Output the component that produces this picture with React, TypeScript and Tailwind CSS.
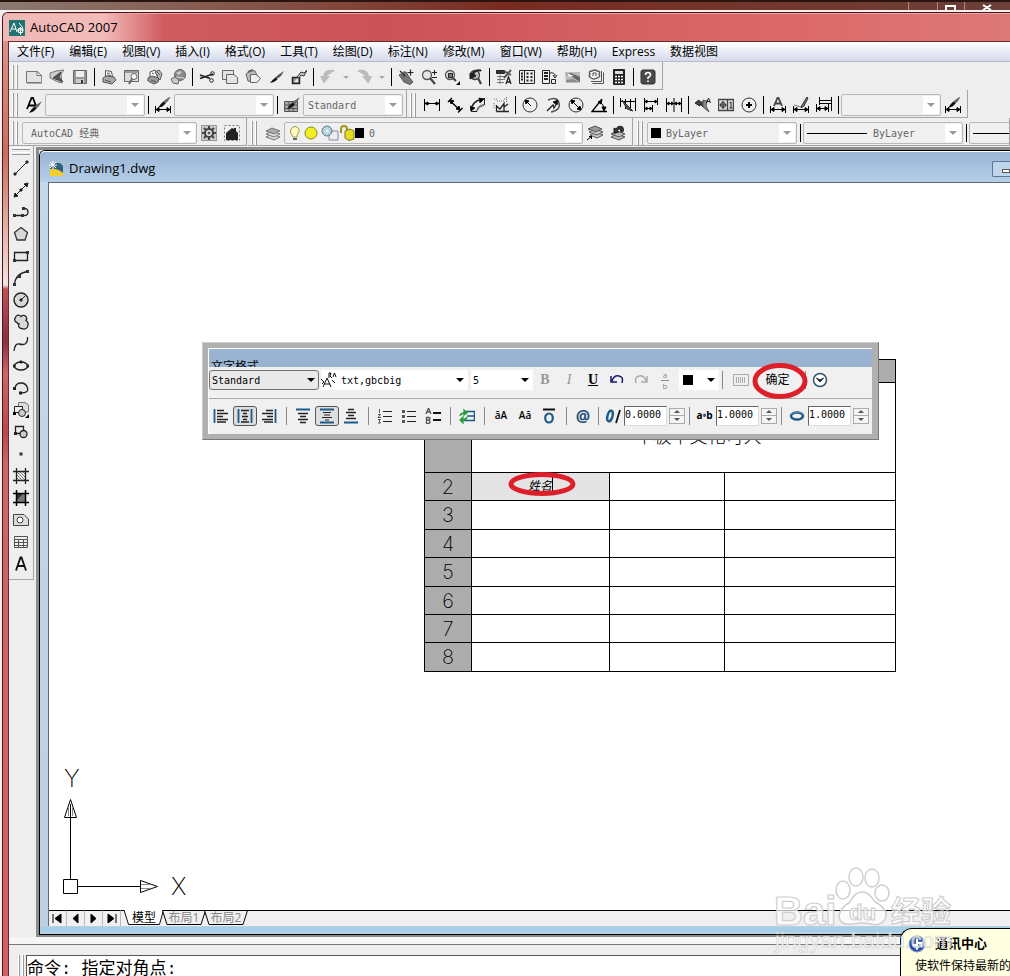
import React from 'react';

const UI = "font-['Open_Sans','Noto_Sans_CJK_SC',sans-serif]";
const MONO = "font-['DejaVu_Sans_Mono','Noto_Sans_CJK_SC',monospace]";

const K = '#222';
const G = '#777';
const L = '#d8d8d8';
const B = '#1c5a86';

const Brush = ({ y = 0 }: { y?: number }) => (
  <g transform={`translate(0 ${y})`} stroke="none">
    <path d="M16 0 10 4 8 6 10 8 13 5Z" fill="#666" />
    <path d="M8.500 5.500 10.500 7.500Q8 11 3 12 5 8 8.500 5.500Z" fill="#111" />
  </g>
);

// Extension lines with an arrowed dimension line along the bottom
const DimBase = () => (
  <g stroke="#000">
    <path d="M.5 9V16M15.500 9V16M1 12.500H15" />
    <path d="M1 12.500 4 10.500V14.500ZM15 12.500 12 10.500V14.500Z" fill="#000" />
  </g>
);

// All glyphs share a 16x16 box, default stroke is dark and one pixel wide
const glyphs: Record<string, React.ReactNode> = {
  new: <g><path d="M.5 2.500H11L15.500 6.500V13.500H.5Z" fill="#e4e4e4" stroke={G} /><path d="M11 2.500V6.500H15.500Z" fill="#fff" stroke={G} /><path d="M1 14.500H16V8" stroke="#aaa" /></g>,
  open: <g stroke={G}><path d="M1 4 7 2 15 1 12 5 13 14 9 13 1 9Z" fill="#ccc" /><path d="M4 9 12 3 10 8 14 13 9 11Z" fill="#555" stroke="#444" /></g>,
  save: <g><path d="M1.500 1.500H14.500V14.500H1.500Z" fill="#999" stroke="#666" /><path d="M4 2H12V8H4Z" fill="#eee" stroke="none" /><path d="M4 10H12V14H4Z" fill="#ccc" stroke="none" /><path d="M9 11H11V14H9Z" fill="#333" stroke="none" /></g>,
  print: <g stroke="#555"><path d="M4.500 8V1.500L10.500 2.500 11.500 8" fill="#fff" /><path d="M2 9 5 7 13 8 15 11 11 15 2 13Z" fill="#aaa" /><path d="M4 11 10 13M6 4 9 4.500M6 6 10 6.500" /></g>,
  preview: <g stroke="#666"><path d="M.5 1.500H14.500V12.500H.5Z" fill="#ddd" /><path d="M1 2H14V4H1Z" fill="#999" stroke="none" /><circle cx="10" cy="7.500" r="3" fill="#f4f4f4" /><path d="M8 10 5 15" strokeWidth="2" /></g>,
  publish: <g stroke="#555"><path d="M3 8V3L8 1 10 7" fill="#fff" /><path d="M1 9 5 7 12 9 11 13 7 15 1 12Z" fill="#999" /><path d="M8 3 12 1 15 5 13 11 11 9 10 6Z" fill="#bbb" /><path d="M4 11 9 13M5 4 7 5M10 3 13 6" /></g>,
  dwf: <g stroke="#666"><circle cx="10" cy="6" r="5.500" fill="#8a8a8a" /><path d="M6 4Q9 1 12 3L9 6Z" fill="#ccc" stroke="none" /><path d="M6 8 14 9" stroke="#ddd" /><path d="M1 10 5 8 9 11 8 15 3 14Z" fill="#ccc" /></g>,
  cut: <g stroke="#222"><path d="M1 6 11 9.500M1 9.500 14 5" strokeWidth="1.800" /><circle cx="13.500" cy="4.500" r="1.800" /><circle cx="12.500" cy="11.500" r="1.800" /></g>,
  copy: <g stroke="#666" fill="#e4e4e4"><path d="M.5 1.500H11.500V10.500H.5Z" /><path d="M4.500 5.500H12L15.500 8.500V14.500H4.500Z" /></g>,
  paste: <g stroke="#666"><path d="M1 5 6 1 10 2 13 8 10 13 3 12Z" fill="#bbb" /><path d="M5.500 5.500H11L15.500 9.500 12 13.500H5.500Z" fill="#eee" /><path d="M3 3 8 1" strokeWidth="2" /></g>,
  match: <g stroke="none"><path d="M16 2 10 6 7 9 9 10 13 7Z" fill="#555" /><path d="M7.500 8.500 9.500 10.500Q7 13 2 14 4 11 7.500 8.500Z" fill="#111" /></g>,
  block: <g><path d="M1.500 8.500H8.500V14.500H1.500Z" fill="#999" strokeWidth="1.500" /><path d="M3 13 7 9V13Z" fill="#eee" stroke="none" /><path d="M6 8 10 3 13 4 16 1 13 7 10 6 8 9Z" fill="#ccc" stroke="#333" /></g>,
  undo: <path d="M14 2Q4 0 4 9M1.500 8 4 13 8 8Z" stroke="#bbb" strokeWidth="2" fill="#bbb" />,
  redo: <path d="M2 2Q12 0 12 9M8 8 12 13 14.500 8Z" stroke="#bbb" strokeWidth="2" fill="#bbb" />,
  pan: <g><path d="M1 6 3 5 7 8 5 3 8 3 11 8 15 13 12 15.500 6 13Z" fill="#777" stroke="#555" /><path d="M2 2 7 7M12.500 .5V6.500M9.500 3.500H15.500" strokeWidth="1.200" /></g>,
  zoomrt: <g><circle cx="6" cy="6" r="4.500" fill="#e6e6e6" stroke="#555" strokeWidth="1.300" /><path d="M9 9 14 15" stroke="#444" strokeWidth="2.200" /><path d="M11 3.500H16M13.500 1V6M11 8.500H16" /></g>,
  zoomwin: <g><circle cx="6" cy="6" r="4.500" fill="#ddd" stroke="#555" strokeWidth="1.300" /><path d="M4.500 4.500H8.500V8.500H4.500Z" fill="#777" /><path d="M9 9 12 12" stroke="#444" strokeWidth="2.200" /><path d="M12 16H16V12Z" fill="#000" stroke="none" /></g>,
  zoomprev: <g><circle cx="8" cy="6" r="4.500" fill="#bbb" stroke="#444" strokeWidth="1.300" /><path d="M11 9 14 15" stroke="#444" strokeWidth="2.200" /><path d="M14 2Q8 1 7 5L9 7 3 10 3 4 5 5Q7 0 14 1Z" fill="#222" /></g>,
  props: <g><path d="M.5 1.500H8.500V4.500H.5Z" fill="#333" /><path d="M1 7.500H9M1 10.500H9M1 13.500H8M4 6V15" stroke={G} /><path d="M8 2 15 6M15 1 8 9" stroke="#555" strokeWidth="2" /><path d="M10 15 12.500 8 15 15M11 13H14.500" strokeWidth="1.300" /></g>,
  design: <g><path d="M.5 1.500H15.500V14.500H.5Z" fill="#eee" /><path d="M5.500 1.500V14.500" /><path d="M2 4.500H4M2 7.500H4M2 10.500H4M7.500 4.500H9.500M11.500 4.500H13.500M7.500 8H9.500M11.500 8H13.500M7.500 11.500H9.500M11.500 11.500H13.500" strokeWidth="2" /></g>,
  palette: <g><path d="M.5 1.500H7.500V14.500H.5Z" fill="#eee" /><path d="M2 4H6M2 7H6M2 10H6" strokeWidth="2" /><path d="M8 4Q13 3 13 7M11 6 13 9 15 6M9.500 10.500H13.500V14.500H9.500Z" /></g>,
  sheet: <g stroke="none"><path d="M0 3H15V14H1Z" fill="#bbb" /><path d="M1 5 6 4 15 8V13L9 9Z" fill="#666" /><path d="M2 4 9 7 4 8Z" fill="#eee" /><path d="M1 11 8 10 14 13H1Z" fill="#888" /></g>,
  markup: <g stroke="#555"><path d="M4.500 14.500H15.500V3.500M3 12.500H13.500V2" /><path d="M3 9Q0 7 2 5 0 2 4 2 7 0 9 2 13 2 11 5 13 8 9 9 6 11 3 9Z" fill="#eee" strokeWidth="1.300" /><path d="M5 7V4H8V7" /></g>,
  calc: <g><path d="M2.500 .5H13.500V15.500H2.500Z" fill="#222" /><path d="M4 2H12V5H4Z" fill="#ddd" stroke="none" /><path d="M4 7.500H12M4 10.500H12M4 13.500H12" stroke="#fff" strokeWidth="1.500" strokeDasharray="2 1" /></g>,
  help: <g><rect x="1" y="1" width="14" height="14" rx="2" fill="#4a4a4a" stroke="#333" /><path d="M5.500 6Q5.500 3.500 8 3.500T10.500 6Q10.500 7.500 8 8.500V10M8 11.500V13" stroke="#fff" strokeWidth="1.600" /></g>,
  textstyle: <g><path d="M1 12 5.500 1H7L10 9M3 8.500H9" strokeWidth="1.800" stroke="#000" /><Brush y={4} /></g>,
  dimstyle: <g><DimBase /><Brush y={-1} /></g>,
  tablestyle: <g><path d="M.5 4.500H13.500V14.500H.5ZM.5 8H13.500M.5 11.500H13.500M5 5V14M9 5V14" fill="#aaa" stroke="#555" /><Brush /></g>,
  linear: <path d="M.5 2V14M15.500 2V14M1 6.500H15M1 6.500 4 5V8ZM15 6.500 12 5V8Z" fill="#000" stroke="#000" />,
  aligned: <g stroke="#000"><path d="M2 3 13 13M1 5 5 1M11 15.500 15.500 11" strokeWidth="1.400" /><path d="M3 3 7 4 4 7ZM13 13 9 12 12 9Z" fill="#000" /></g>,
  arclen: <g><path d="M1 14Q2 3 14 2" strokeWidth="1.500" /><path d="M7 14Q8 9 14 8" stroke={G} strokeWidth="1.800" /><path d="M1 14.500H7M14.500 1V8" /><path d="M0 9 1 14 5 11ZM9 1 14 2 10 6Z" fill="#000" /></g>,
  ordinate: <g><path d="M3.500 14.500V9L7 12 11 6.500V14.500H3.500M11 10 15 7M4 14.500H16" strokeWidth="1.300" /><path d="M1 2H5M11 2H15M1 6V12M13.500 0V6M4 4H11" stroke={G} strokeDasharray="1 1" /></g>,
  radius: <g><circle cx="8" cy="8" r="7" stroke="#333" /><path d="M9 9 5 5" stroke="#000" /><path d="M3 3 7 4 4 7Z" fill="#000" stroke="#000" /></g>,
  jogged: <g><path d="M3 3Q12 -1 14 6T6 15" stroke="#555" strokeWidth="1.500" /><path d="M2 14 8 8 9 11 13 4" strokeWidth="1.300" /><path d="M13 3 8 5 12 8Z" fill="#000" /></g>,
  diameter: <g><circle cx="8" cy="8" r="7" stroke="#333" /><path d="M4 4 12 12M3 3 7 4 4 7ZM13 13 9 12 12 9Z" fill="#000" stroke="#000" /></g>,
  angular: <g stroke="#000"><path d="M16 14.500H1L11 2" strokeWidth="1.300" /><path d="M9 5Q13 7 13 13" /><path d="M7 5 11 3 10 7ZM11 10H15L13 14Z" fill="#000" /></g>,
  quick: <g stroke="#000"><path d="M.5 1V10M15.500 1V14M1 4.500H15M5.500 2V12M10.500 2V14" /><path d="M2 3 13 14 7 12Z" fill="#555" stroke="#333" /></g>,
  baseline: <g stroke="#000"><path d="M1.500 1V15M14.500 1V8M9.500 8V15M2 4.500H14M2 11.500H9" /><path d="M2 4.500 4 3V6ZM14 4.500 12 3V6ZM2 11.500 4 10V13ZM9 11.500 7 10V13Z" fill="#000" /></g>,
  contin: <g stroke="#000"><path d="M.5 1V15M8 1V15M15.500 1V15M1 6.500H15" /><path d="M1 6.500 3 5V8ZM7.500 6.500 5.500 5V8ZM8.500 6.500 10.500 5V8ZM15 6.500 13 5V8Z" fill="#000" /></g>,
  leader: <g><path d="M0 6 4 3 5 5Q9 4 10 9L8 10 5 7 5 9Z" fill="#444" /><path d="M8 3 12 4 11 9 14 15 8 10Z" fill="#888" stroke="#555" /><path d="M11.500 6 13.500 1 15.500 6M12 4.500H15" /></g>,
  tolerance: <g><path d="M.5 2.500H15.500V13.500H.5ZM9.500 2.500V13.500" fill="#ddd" stroke="#444" strokeWidth="1.300" /><circle cx="5" cy="8" r="2.500" /><path d="M5 4V12M1.500 8H8.500M11.500 6 13 5V11M11.500 11H14.500" /></g>,
  center: <g><circle cx="8" cy="8" r="7" stroke="#333" /><path d="M8 5V11M5 8H11" strokeWidth="2" stroke="#000" /></g>,
  dimedit: <g><path d="M4 9 7.500 1H8.500L12 9M5 6.500H11" strokeWidth="1.800" stroke="#444" /><DimBase /></g>,
  dimtext: <g><path d="M14 0 9 8 8 11 11 9 15 1Z" fill="#777" stroke="#333" /><path d="M1 8 8 10" stroke={G} /><DimBase /></g>,
  dimupd: <g stroke="#000"><path d="M3.500 0V8M15.500 0V14M4 3.500H15M.5 7V15M12.500 7V15M1 11.500H12M3 6.500H15" /><path d="M1 11.500 4 9.500V13.500ZM12 11.500 9 9.500V13.500Z" fill="#000" /></g>,
  gear: <g><rect x=".5" y=".5" width="15" height="15" fill="#ccc" stroke="#555" strokeDasharray="1 1" /><circle cx="8" cy="8" r="4" stroke="#444" strokeWidth="2.200" fill="#eee" /><path d="M8 1V4M8 12V15M1 8H4M12 8H15M3 3 5 5M11 11 13 13M13 3 11 5M3 13 5 11" stroke="#444" strokeWidth="2" /><circle cx="8" cy="8" r="1" /></g>,
  home: <g><rect x=".5" y=".5" width="15" height="15" stroke={G} strokeDasharray="2 2" /><path d="M2 8 8 3 10 4V3H12V6L14 8V15H2Z" fill="#222" stroke="none" /></g>,
  layers: <g stroke="#777" fill="#ddd"><path d="M1 12 7 9 15 12 9 15Z" /><path d="M1 9 7 6 15 9 9 12Z" /><path d="M1 6 7 3 15 6 9 9Z" fill="#aaa" /></g>,
  makelayer: <g stroke="#555" fill="#ccc"><path d="M3 10 9 7 16 10 10 13Z" /><path d="M2 7 8 4 16 7 10 10Z" /><path d="M1 4 8 1 15 4 9 7Z" fill="#999" /><path d="M0 15 5 11M4.500 14V11.500H2" stroke="#000" /></g>,
  prevlayer: <g stroke="#555" fill="#bbb"><path d="M1 12 7 9 15 12 9 15Z" /><path d="M1 9 7 6 15 9 9 12Z" /><path d="M13 7Q15 0 8 1.500L6 4 4 3 4 8.500 9 7 7.500 5.500Q10 2 11 7Z" fill="#333" stroke="#222" /></g>,
  line: <path d="M2 14 14 2M1 13H3V15H1ZM13 1H15V3H13Z" fill="#333" />,
  xline: <path d="M2 14 14 2M1 15 2 11 5 14ZM15 1 11 2 14 5ZM7 7H9V9H7Z" fill="#000" />,
  pline: <g><path d="M1 11.500H9M10 4.500Q15 4 15 8T10 11.500" strokeWidth="1.300" /><path d="M0 10H3V13H0ZM8 10H11V13H8ZM9 3H12V6H9Z" fill="#333" stroke="none" /></g>,
  polygon: <path d="M8 1.500 14.500 6.500 12 14H4L1.500 6.500Z" fill={L} stroke="#333" strokeWidth="1.300" />,
  rect: <g><path d="M1.500 4.500H14.500V12.500H1.500Z" fill="#e8e8e8" strokeWidth="1.300" /><path d="M0 11H3V14H0ZM13 3H16V6H13Z" fill="#333" stroke="none" /></g>,
  arc: <g><path d="M1.500 14Q3 3 15 1.500" strokeWidth="1.300" /><path d="M0 13H3V16H0ZM5 5H8V8H5ZM13 0H16V3H13Z" fill="#333" stroke="none" /></g>,
  circle: <g><circle cx="8" cy="8" r="7" fill={L} strokeWidth="1.400" /><path d="M8 8 12 4M7 7H9V9H7Z" fill="#222" /></g>,
  cloud: <path d="M4 8.500A3 3 0 0 1 2.500 3.500 3 3 0 0 1 8 2.500 3 3 0 0 1 13 6.500 4 4 0 0 1 15 11 4 4 0 0 1 9 14.500 3 3 0 0 1 6 10 2 2 0 0 1 4 8.500Z" fill={L} strokeWidth="1.300" />,
  spline: <path d="M1 15Q2 7 6 8T12 8Q15 6 14.500 1" strokeWidth="1.300" />,
  ellipse: <g><ellipse cx="8" cy="8" rx="6.500" ry="4" fill="#eee" strokeWidth="1.400" /><path d="M0 7H2V9H0ZM14 7H16V9H14ZM7 3H9V5H7Z" fill="#222" /></g>,
  ellarc: <g><path d="M2 8Q3 3 8 3T14.500 8 8 13" strokeWidth="1.300" fill="#e8e8e8" /><path d="M0 7H3V10H0ZM6 11.500H9V14.500H6Z" fill="#222" stroke="none" /></g>,
  insert: <g><path d="M5.500 .5H12L15.500 3V10H5.500Z" fill="#ddd" stroke={G} /><path d="M1.500 4.500H9.500V10.500H1.500Z" fill="#eee" /><circle cx="9" cy="11" r="3.500" fill="#ccc" /><path d="M0 10H3V13H0ZM12 16H16V12Z" fill="#000" stroke="none" /></g>,
  mkblock: <g><path d="M2.500 2.500H10.500V9.500H2.500Z" fill="#eee" strokeWidth="1.300" /><circle cx="10.500" cy="10" r="3.500" fill="#ccc" strokeWidth="1.300" /><path d="M1 8H4V11H1Z" fill="#222" stroke="none" /></g>,
  point: <path d="M6.500 6.500H9.500V9.500H6.500Z" fill="#333" stroke="none" />,
  hatch: <g><path d="M4 4 12 12M4 7 9 12M7 4 12 9M4 10 6 12M10 4 12 6" stroke={G} /><path d="M3.500 0V16M12.500 0V16M0 3.500H16M0 12.500H16" strokeWidth="1.300" /></g>,
  gradient: <g><path d="M3 3H13V13H3Z" fill="#777" stroke="none" /><path d="M3 3H11L3 11Z" fill="#333" stroke="none" /><path d="M3.500 0V16M12.500 0V16M0 3.500H16M0 12.500H16" stroke="#000" strokeWidth="1.500" /></g>,
  region: <g stroke="#444"><path d="M.5 2.500H11L15.500 7V13.500H.5Z" fill="#ddd" /><circle cx="7" cy="8" r="3" fill="#fff" /></g>,
  table: <path d="M1.500 2.500H14.500V13.500H1.500ZM1.500 5.500H14.500M1.500 8.500H14.500M1.500 11.500H14.500M5.500 5V13.500M10.500 5V13.500" fill="#eee" stroke="#555" />,
  mtext: <path d="M3 14.500 7.500 1.500H8.500L13 14.500M5 10H11" stroke="#111" strokeWidth="1.800" />,
  left: <g><path d="M1.500 1V15" stroke={B} strokeWidth="1.800" /><path d="M4 2.500H11M4 5.500H15M4 8.500H10M4 11.500H15M4 14H13" strokeWidth="1.300" /></g>,
  mid: <g><path d="M1.500 1V15M14.500 1V15" stroke={B} strokeWidth="1.800" /><path d="M4 2.500H12M6 5.500H10M5 8.500H11M6 11.500H10M4 14H12" strokeWidth="1.300" /></g>,
  right: <g><path d="M14.500 1V15" stroke={B} strokeWidth="1.800" /><path d="M5 2.500H12M1 5.500H12M6 8.500H12M1 11.500H12M3 14H12" strokeWidth="1.300" /></g>,
  top: <g><path d="M1 1.500H15" stroke={B} strokeWidth="2" /><path d="M3 5.500H13M5 8.500H11M3 11.500H13M5 14.500H11" strokeWidth="1.300" /></g>,
  vmid: <g><path d="M1 1.500H15M1 14.500H15" stroke={B} strokeWidth="2" /><path d="M4 4.500H12M5 7H11M3 9.500H13M6 12H10" strokeWidth="1.200" /></g>,
  bottom: <g><path d="M1 14.500H15" stroke={B} strokeWidth="2" /><path d="M5 1.500H11M3 4.500H13M5 7.500H11M3 10.500H13" strokeWidth="1.300" /></g>,
  numbers: <g><path d="M6 3.500H15M6 8.500H15M6 13.500H15" strokeWidth="1.200" /><path d="M2.500 1V5M1 6.500H3.500L1 9.500H4M1 11.500H3.500L2 13 3.500 15H1" stroke="#555" /></g>,
  bullets: <g><path d="M6 3.500H15M6 8.500H15M6 13.500H15" strokeWidth="1.200" /><path d="M1 2H4V5H1ZM1 7H4V10H1ZM1 12H4V15H1Z" fill="#555" stroke="none" /></g>,
  upper: <g><path d="M1 6 3.500 0 6 6M2 4H5M1.500 9.500H4Q6 10 4 12 6 14 4 15.500H1.500ZM1.500 12H4" stroke="#555" strokeWidth="1.300" /><path d="M8 5H16M8 12H16" strokeWidth="2" stroke="#111" /></g>,
  field: <g><path d="M5 3.500H15.500V12.500H5M8 8H15" stroke={B} strokeWidth="1.500" /><path d="M1 8Q2 4 6 5M8 9Q7 13 3 12M5 2 8 5 5 7ZM4 9 1 12 4 15Z" fill="#2a9a3c" stroke="#2a9a3c" strokeWidth="1.300" /></g>,
  over: <g><path d="M2 1.500H14" strokeWidth="2" stroke="#111" /><ellipse cx="8" cy="10" rx="3.800" ry="4.500" stroke={B} strokeWidth="2.200" /></g>,
  oblique: <g><ellipse cx="5" cy="8" rx="2.500" ry="5.500" transform="rotate(15 5 8)" stroke={B} strokeWidth="2.400" /><path d="M15 2 11 15" strokeWidth="1.800" stroke="#111" /></g>,
  widthf: <g><ellipse cx="8" cy="8" rx="6" ry="3.500" stroke={B} strokeWidth="2.400" /><path d="M2 6Q8 2 14 6" stroke="#5b93b8" /></g>,
  tundo: <path d="M3 9Q5 3 10 4 15 5 13 11M2 4V10H8" stroke="#1a1a70" strokeWidth="1.500" />,
  tredo: <path d="M13 9Q11 3 6 4 1 5 3 11M14 4V10H8" stroke="#aaa" strokeWidth="1.500" />,
  ruler: <path d="M.5 2.500H15.500V13.500H.5ZM3.500 5V11M5.500 5V11M7.500 5V11M9.500 5V11M11.500 5V11" stroke="#aaa" />,
  more: <g><circle cx="8" cy="8" r="6.500" stroke="#35556b" strokeWidth="1.500" fill="#fff" /><path d="M4.500 6 8 10 11.500 6 8 8Z" fill="#1b2b36" stroke="#1b2b36" /></g>,
  font: <g stroke="#111"><path d="M2 15 6 6 10 15M3 12H9M0 7 3 10 1 12M8 6V1H10L9 4 11 6M12 5 13.500 1 15 5M11 8 14 11" /></g>,
};

const Glyph = ({ name }: { name: string }) => (
  <svg viewBox="0 0 16 16" className="size-4 shrink-0" fill="none" stroke={K} strokeWidth="1" aria-hidden="true">
    {glyphs[name]}
  </svg>
);

const Tool = ({ name, className = 'h-6 w-[23px]' }: { name: string; className?: string }) => (
  <button type="button" aria-label={name} className={`flex shrink-0 items-center justify-center ${className}`}>
    <Glyph name={name} />
  </button>
);

const Sep = () => (
  <div className="flex w-[6px] shrink-0 justify-center">
    <div className="h-[18px] w-px bg-black" />
  </div>
);

const Grip = () => (
  <div className="mr-[3px] flex h-6 w-[7px] shrink-0 gap-[2px]">
    <div className="w-[2px] border-l border-r border-l-white border-r-[#999]" />
    <div className="w-[2px] border-l border-r border-l-white border-r-[#999]" />
  </div>
);

const Bar = ({ children, className = '' }: { children: React.ReactNode; className?: string }) => (
  <div className={`flex h-7 items-center border-r border-b border-[#a5a5a5] pt-[3px] pr-[3px] pl-[3px] ${className}`}>
    <Grip />
    {children}
  </div>
);

// Space separated tool names, '|' stands for a separator
const Tools = ({ list }: { list: string }) => (
  <>
    {list.split(' ').map((n, i) => (n === '|' ? <Sep key={i} /> : <Tool key={i} name={n} />))}
  </>
);

type ComboProps = {
  label: string;
  value?: string;
  className: string;
  pad?: string;
  children?: React.ReactNode;
};

const Combo = ({ label, value = '', className, pad = 'pl-1', children }: ComboProps) => (
  <div className={`relative h-[22px] shrink-0 ${className}`}>
    <select
      aria-label={label}
      defaultValue={value}
      className={`block h-full w-full appearance-none rounded-[2px] border border-[#b8b8b8] bg-[#f0f0f0] text-[10px] text-[#666] ${MONO} ${pad}`}
    >
      <option>{value}</option>
    </select>
    <div className="pointer-events-none absolute inset-y-[2px] right-[2px] flex w-4 items-center justify-center bg-white">
      <svg viewBox="0 0 8 4" className="h-1 w-2 fill-[#999]"><path d="M0 0H8L4 4Z" /></svg>
    </div>
    {children && <div className="pointer-events-none absolute inset-y-0 left-1 flex items-center">{children}</div>}
  </div>
);

const MiniArrow = () => (
  <button type="button" aria-label="history" className="flex h-6 w-[13px] shrink-0 items-center justify-center">
    <svg viewBox="0 0 8 4" className="h-[3px] w-[6px] fill-[#aaa]"><path d="M0 0H8L4 4Z" /></svg>
  </button>
);

const menus = ['文件(F)', '编辑(E)', '视图(V)', '插入(I)', '格式(O)', '工具(T)', '绘图(D)', '标注(N)', '修改(M)', '窗口(W)', '帮助(H)', 'Express', '数据视图'];

const drawTools = ['line', 'xline', 'pline', 'polygon', 'rect', 'arc', 'circle', 'cloud', 'spline', 'ellipse', 'ellarc', 'insert', 'mkblock', 'point', 'hatch', 'gradient', 'region', 'table', 'mtext'];

const LayerState = () => (
  <svg viewBox="0 0 76 18" className="h-[18px] w-[76px]" fill="none">
    <path d="M4 11Q1 8 3 5 7 0 11 5 12 8 9 11V13H5Z" fill="#fffbc0" stroke="#a59a40" />
    <path d="M5 14H9V16H5Z" fill="#666" />
    <circle cx="23" cy="9" r="6" fill="#f2ee20" stroke="#8a8620" />
    <path d="M41 7H50V16H41Z" fill="#eee" stroke="#88a" />
    <circle cx="39" cy="7" r="5" fill="#9fc0c8" stroke="#5f8790" />
    <path d="M39 3V11M35 7H43M36 4 42 10M42 4 36 10" stroke="#e4f2f4" />
    <path d="M53 9V5Q53 2 56 2T59 5V8" stroke="#9a9618" strokeWidth="2" />
    <path d="M57 7 62 5 66 7V15L61 16.500 57 14Z" fill="#e6dc20" stroke="#7a7a10" />
    <path d="M67 4H76V14H67Z" fill="#000" />
  </svg>
);

const Toolbars = () => (
  <div className="shrink-0 overflow-hidden">
    <div className="flex">
      <Bar>
        <Tools list="new open save | print preview publish dwf | cut copy paste match block |" />
        <Tool name="undo" />
        <MiniArrow />
        <Tool name="redo" />
        <MiniArrow />
        <Tools list="| pan zoomrt zoomwin zoomprev | props design palette sheet markup calc | help" />
      </Bar>
    </div>
    <div className="flex">
      <Bar>
        <Tool name="textstyle" />
        <Combo label="text style" className="w-[100px]" />
        <Sep />
        <Tool name="dimstyle" />
        <Combo label="dimension style" className="w-[100px]" />
        <Sep />
        <Tool name="tablestyle" />
        <Combo label="table style" value="Standard" className="w-[100px]" />
      </Bar>
      <Bar>
        <Tools list="linear aligned arclen ordinate | radius jogged diameter angular | quick baseline contin | leader tolerance center | dimedit dimtext dimupd |" />
        <Combo label="current dimension style" className="w-[100px]" />
        <Tool name="dimstyle" />
      </Bar>
    </div>
    <div className="flex">
      <Bar>
        <Combo label="workspace" value="AutoCAD 经典" className="w-[175px]" pad="pl-2" />
        <Tools list="gear home" />
      </Bar>
      <Bar className="ml-px">
        <Tool name="layers" />
        <Combo label="layer" value="0" className="w-[299px]" pad="pl-[84px]">
          <LayerState />
        </Combo>
        <Tools list="makelayer prevlayer" />
      </Bar>
      <Bar className="ml-px min-w-0 flex-1 overflow-hidden">
        <Combo label="colour" value="ByLayer" className="w-[150px]" pad="pl-[18px]">
          <div className="size-[10px] bg-black" />
        </Combo>
        <Sep />
        <Combo label="linetype" value="ByLayer" className="w-[160px]" pad="pl-[69px]">
          <div className="h-px w-[60px] bg-black" />
        </Combo>
        <Sep />
        <Combo label="lineweight" value="ByLayer" className="w-[160px]" pad="pl-[69px]">
          <div className="h-px w-[60px] bg-black" />
        </Combo>
      </Bar>
    </div>
  </div>
);

const rows = [
  { n: 2, h: 'h-[28px]' },
  { n: 3, h: 'h-[29px]' },
  { n: 4, h: 'h-[28px]' },
  { n: 5, h: 'h-[29px]' },
  { n: 6, h: 'h-[28px]' },
  { n: 7, h: 'h-[28px]' },
  { n: 8, h: 'h-[29px]' },
];

const headCell = "border border-black bg-[#adadad] p-0 text-center font-['Inter',sans-serif] text-[20px] leading-none font-extralight";

const DrawingTable = () => (
  <table className="absolute top-[176px] left-[375px] w-[472px] table-fixed border-collapse bg-white text-black">
    <colgroup>
      <col className="w-[47px]" />
      <col className="w-[138px]" />
      <col className="w-[115px]" />
      <col className="w-[171px]" />
    </colgroup>
    <tbody>
      <tr className="h-[23px]">
        <th className={headCell} />
        <th className={headCell} />
        <th className={headCell} />
        <th className={headCell} />
      </tr>
      <tr className="h-[90px]">
        <th className={headCell}>1</th>
        <td colSpan={3} className="border border-black p-0 pt-[14px] pl-[30px] text-center font-['Noto_Sans_CJK_SC',sans-serif] text-[18px] leading-6 font-light">
          中板中文化可人
        </td>
      </tr>
      {rows.map((r) => (
        <tr key={r.n} className={r.h}>
          <th scope="row" className={headCell}>{r.n}</th>
          {r.n === 2 ? (
            <td className="border border-dashed border-[#999] bg-[#e4e4e4] p-0 pb-1 text-center font-['Noto_Sans_CJK_SC',sans-serif] text-xs leading-4 italic">
              <span className="border-r border-black">姓名</span>
            </td>
          ) : (
            <td className="border border-black p-0" />
          )}
          <td className="border border-black p-0" />
          <td className="border border-black p-0" />
        </tr>
      ))}
    </tbody>
  </table>
);

const Ucs = () => (
  <svg viewBox="0 0 140 140" className="absolute bottom-[9px] left-2 size-[140px]" fill="none" stroke="#000">
    <path d="M6.500 118.500H20.500V132.500H6.500ZM13.500 118V43M21 125.500H83M7.500 56.500H19.500L13.500 38.500ZM83.500 119.500V131.500L100.500 125.500Z" />
    <path d="M11.500 55V47M15.500 55V47M84 123.500H94M84 127.500H94" stroke="#888" />
    <g className="fill-black stroke-none font-['Inter',sans-serif] text-[24px] font-extralight">
      <text x="7" y="26">Y</text>
      <text x="114" y="134">X</text>
    </g>
  </svg>
);

const DlgSep = ({ className = 'w-[10px]' }: { className?: string }) => (
  <div className={`flex shrink-0 justify-center ${className}`}>
    <div className="h-[18px] w-px bg-[#888]" />
  </div>
);

const dlgBtn = 'flex h-5 w-6 shrink-0 items-center justify-center';
const dlgOn = 'flex h-5 w-6 shrink-0 items-center justify-center rounded-[3px] border border-[#555] bg-[#dedede]';

const DlgCombo = ({ label, value = '', className, look = 'bg-white', pad = 'pl-1', children }: ComboProps & { look?: string }) => (
  <div className={`relative h-5 shrink-0 ${className}`}>
    <select aria-label={label} defaultValue={value} className={`block h-full w-full appearance-none text-[10px] text-black ${MONO} ${look} ${pad}`}>
      <option>{value}</option>
    </select>
    <svg viewBox="0 0 8 4" className="pointer-events-none absolute top-2 right-1 h-1 w-2 fill-black"><path d="M0 0H8L4 4Z" /></svg>
    {children && <div className="pointer-events-none absolute inset-y-0 left-1 flex items-center">{children}</div>}
  </div>
);

const NumField = ({ label, value, children }: { label: string; value: string; children: React.ReactNode }) => (
  <div className="flex items-center">
    <div className="flex w-[23px] justify-center">{children}</div>
    <input
      aria-label={label}
      defaultValue={value}
      className={`h-5 w-[43px] border border-[#ddd] border-t-[#666] border-l-[#666] bg-white pb-[3px] text-[10px] text-black ${MONO}`}
    />
    <div className="ml-[2px] flex h-4 w-4 flex-col border border-[#aaa] bg-[#f4f4f4]">
      <button type="button" aria-label={`${label} up`} className="flex flex-1 items-center justify-center border-b border-[#aaa]">
        <svg viewBox="0 0 6 3" className="h-[3px] w-[6px] fill-[#556]"><path d="M0 3H6L3 0Z" /></svg>
      </button>
      <button type="button" aria-label={`${label} down`} className="flex flex-1 items-center justify-center">
        <svg viewBox="0 0 6 3" className="h-[3px] w-[6px] fill-[#556]"><path d="M0 0H6L3 3Z" /></svg>
      </button>
    </div>
  </div>
);

const TextFormat = () => (
  <div className="absolute top-[159px] left-[153px] w-[677px] border border-t-[#ccc] border-r-[#777] border-b-[#777] border-l-[#ccc] bg-[#b0b0b0] p-[5px] pr-[6px]">
    <div className="border-t border-l border-white bg-[#f0f0f0]">
      <div className={`h-[18px] overflow-hidden bg-[#99b3d0] pt-[10px] pl-[2px] text-xs leading-4 text-black ${UI}`}>文字格式</div>
      <div className="flex h-8 items-center border-b border-[#aaa] pb-[5px]">
        <DlgCombo label="style" value="Standard" className="w-[110px]" look="rounded-[3px] border border-[#707070] bg-[#e9e9e9]" pad="pl-[2px]" />
        <DlgCombo label="font" value="txt,gbcbig" className="ml-[2px] w-[147px]" pad="pl-5">
          <div className="-ml-1"><Glyph name="font" /></div>
        </DlgCombo>
        <DlgCombo label="height" value="5" className="ml-[3px] w-[62px]" pad="pl-[2px]" />
        <button type="button" className={`${dlgBtn} font-['Liberation_Serif',serif] text-sm font-bold text-[#999]`}>B</button>
        <button type="button" className={`${dlgBtn} font-['Liberation_Serif',serif] text-sm text-[#999] italic`}>I</button>
        <button type="button" className={`${dlgBtn} font-['Liberation_Serif',serif] text-sm font-bold text-black underline`}>U</button>
        <Tool name="tundo" className="h-5 w-6" />
        <Tool name="tredo" className="h-5 w-6" />
        <button type="button" aria-label="stack" className={`${dlgBtn} flex-col text-[8px] leading-[10px] text-[#888] ${UI}`}>
          <span className="border-b border-[#888] px-[2px]">a</span>
          <span>b</span>
        </button>
        <DlgCombo label="colour" className="ml-[2px] w-10">
          <div className="size-[10px] bg-black" />
        </DlgCombo>
        <DlgSep className="w-[6px]" />
        <Tool name="ruler" className="ml-1 h-5 w-6" />
        <button type="button" className={`h-5 w-[49px] text-xs text-black ${UI}`}>确定</button>
        <DlgSep className="w-[6px]" />
        <Tool name="more" className="h-5 w-6" />
      </div>
      <div className="flex h-[35px] items-center pb-[2px]">
        <Tool name="left" className="h-5 w-6" />
        <button type="button" aria-label="center" className={dlgOn}><Glyph name="mid" /></button>
        <Tool name="right" className="h-5 w-6" />
        <DlgSep />
        <Tool name="top" className="h-5 w-6" />
        <button type="button" aria-label="middle" className={dlgOn}><Glyph name="vmid" /></button>
        <Tool name="bottom" className="h-5 w-6" />
        <DlgSep />
        <Tool name="numbers" className="h-5 w-6" />
        <Tool name="bullets" className="h-5 w-6" />
        <Tool name="upper" className="h-5 w-6" />
        <DlgSep />
        <Tool name="field" className="h-5 w-6" />
        <DlgSep />
        <button type="button" className={`${dlgBtn} text-[10px] font-semibold text-black ${UI}`}>ăA</button>
        <button type="button" className={`${dlgBtn} text-[10px] font-semibold text-black ${UI}`}>Aă</button>
        <Tool name="over" className="h-5 w-6" />
        <DlgSep />
        <button type="button" className={`${dlgBtn} text-base font-bold text-[#1c4f78] ${UI}`}>@</button>
        <DlgSep className="w-[6px]" />
        <NumField label="oblique" value="0.0000"><Glyph name="oblique" /></NumField>
        <DlgSep className="w-[8px]" />
        <NumField label="tracking" value="1.0000">
          <span className={`text-[10px] font-bold text-black ${UI}`}>a<span className="text-[#1c5a86]">•</span>b</span>
        </NumField>
        <DlgSep className="w-[8px]" />
        <NumField label="width" value="1.0000"><Glyph name="widthf" /></NumField>
      </div>
    </div>
    {/* highlight ring round the confirm button */}
    <svg viewBox="0 0 60 40" className="pointer-events-none absolute top-[18px] left-[547px] h-10 w-[60px]" fill="none" stroke="#dd1f2a" strokeWidth="5">
      <ellipse cx="30" cy="20" rx="25" ry="15.500" />
    </svg>
  </div>
);

const navPaths = ['M4 3V12M12 3V12L6 7.500Z', 'M11 3V12L6 7.500Z', 'M6 3V12L11 7.500Z', 'M5 3V12L11 7.500ZM13 3V12'];

const sheets = [
  { name: '模型', w: 'w-10 text-black', on: true },
  { name: '布局1', w: 'w-11 text-[#888]', on: false },
  { name: '布局2', w: 'w-11 text-[#888]', on: false },
];

const SheetTabs = () => (
  <div className="flex h-4 shrink-0 bg-[#f0f0f0]">
    {navPaths.map((d, i) => (
      <button key={i} type="button" aria-label={`sheet ${i}`} className="w-[18px] border-t border-r border-t-black border-r-[#bbb]">
        <svg viewBox="0 0 16 15" className="h-[15px] w-4" fill="#000" stroke="#000"><path d={d} /></svg>
      </button>
    ))}
    <div className="w-[3px] border-t border-black" />
    {sheets.map((s) => (
      <button key={s.name} type="button" className={`relative -mr-[2px] text-xs leading-4 ${UI} ${s.w}`}>
        <svg viewBox="0 0 44 16" preserveAspectRatio="none" className="absolute inset-0 h-4 w-full" stroke="#000" fill={s.on ? '#fff' : '#f0f0f0'}>
          <path d={s.on ? 'M0 0 5 14.500H39L43.500 0' : 'M43.500 .5H.5L5 14.500H39L43.500 .5'} />
        </svg>
        <span className="relative">{s.name}</span>
      </button>
    ))}
    <div className="flex-1 border-t border-black" />
  </div>
);

const DrawingWindow = () => (
  <div className="mt-px flex min-w-0 flex-1 flex-col overflow-hidden border-t-[3px] border-b-2 border-l-[3px] border-[#8c8c8c]">
    <div className="flex flex-1 flex-col rounded-tl-[6px] border-t border-b border-l border-black bg-gradient-to-b from-[#c4d8ec] to-[#bdd0e2] pb-[2px] pl-2">
      <div className="-ml-2 flex h-[31px] shrink-0 items-center rounded-tl-[5px] border-t border-white bg-gradient-to-b from-[#9ab5d4] to-[#b5cfea] pt-[3px] pl-[9px]">
        <svg viewBox="0 0 16 16" className="size-4">
          <path d="M5 2H11L14 5V15H1V6Z" fill="#33607c" />
          <path d="M1 8Q8 7 14 12V15H1Z" fill="#f4cf2c" />
          <path d="M4 0V8M0 4H8M1 1 7 7M7 1 1 7" stroke="#fff" />
        </svg>
        <h2 className={`ml-1 text-[13px] text-black ${UI}`}>Drawing1.dwg</h2>
        <button type="button" aria-label="minimize" className="ml-auto flex h-4 w-[18px] items-center justify-end rounded-l-[2px] border border-r-0 border-[#5c7694] bg-[#bfd5ea]">
          <span className="mt-1 h-1 w-2 border border-[#555] bg-white" />
        </button>
      </div>
      <div className="flex flex-1 flex-col border-t border-l border-[#667]">
        <div className="relative flex-1 overflow-hidden bg-white">
          <DrawingTable />
          <svg viewBox="0 0 72 26" className="absolute top-[288px] left-[457px] h-[26px] w-[72px]" fill="none" stroke="#dd1f2a" strokeWidth="5">
            <ellipse cx="36" cy="13" rx="31" ry="9.500" />
          </svg>
          <Ucs />
          <TextFormat />
        </div>
        <SheetTabs />
      </div>
      <div className="-ml-2 mt-px h-[5px] bg-[#a5cfe8]" />
    </div>
  </div>
);

const Watermark = () => (
  <svg viewBox="0 0 190 96" className="pointer-events-none absolute right-[50px] bottom-5 h-24 w-[190px]" fill="#fff" fillOpacity=".7" stroke="#cfcfcf">
    <g strokeWidth="1.500">
      <ellipse cx="73" cy="30" rx="7" ry="9" />
      <ellipse cx="86" cy="17" rx="7" ry="9" />
      <ellipse cx="102" cy="18" rx="7" ry="9" />
      <ellipse cx="112" cy="33" rx="7" ry="8" />
      <path d="M92 32Q99 32 104 41 118 49 116 57 112 67 101 64 92 62 83 64 70 66 69 56 70 48 80 42 85 32 92 32Z" />
    </g>
    <g className="font-['Liberation_Sans','Noto_Sans_CJK_SC',sans-serif] font-bold" strokeWidth="1.200">
      <text x="4" y="65" fontSize="40">Bai</text>
      <text x="79" y="60" fontSize="22">du</text>
      <text x="121" y="62" fontSize="30">经验</text>
    </g>
    <text x="5" y="88" fontSize="22" strokeWidth=".6" className="font-['Liberation_Sans',sans-serif]">jingyan.baidu.com</text>
  </svg>
);

const Balloon = () => (
  <aside className={`absolute right-0 bottom-0 h-12 w-[110px] overflow-hidden rounded-tl-[12px] border-t border-l border-black bg-[#ffffe1] pl-[7px] text-black ${UI}`}>
    <div className="mt-1 flex h-[22px] items-center gap-[9px] text-[13px] font-bold whitespace-nowrap">
      <svg viewBox="0 0 16 16" className="size-[18px] shrink-0">
        <circle cx="8" cy="8" r="7" fill="#2447a0" stroke="#7f93c8" />
        <path d="M8 3V13M8 7H12V11M4 9H8" stroke="#fff" strokeWidth="2" fill="none" />
      </svg>
      通讯中心
    </div>
    <p className="ml-[7px] text-xs leading-[22px] whitespace-nowrap">使软件保持最新的</p>
  </aside>
);

export default function App() {
  return (
    <div className="relative flex h-screen flex-col overflow-hidden bg-[#eee]">
      {/* sliver of the window behind */}
      <div className="flex h-[10px] shrink-0 justify-end border-t-2 border-[#2a1410] bg-gradient-to-r from-[#8a7a70] via-[#7a2a20] to-[#6b4038]">
        <svg viewBox="0 0 102 8" className="h-2 w-[102px]" fill="none" stroke="#d9c4bc">
          <path d="M.5 0V8M29.500 0V8M56.500 0V8" stroke="#b08a80" />
          <path d="M38 8V4H47V8M75 3 83 8M83 3 75 8" stroke="#fff" strokeWidth="2" />
        </svg>
      </div>
      <div className="flex min-h-0 flex-1 flex-col border-t-2 border-l-2 border-[#f6eeee]">
        <div className="flex min-h-0 flex-1 flex-col rounded-tl-[6px] border-t border-l border-[#451a1a] bg-[linear-gradient(to_bottom,#e09a96_0px,#c8705c_140px,#f3e2e2_272px,#c0505a_276px,#8a3040_328px,#cf646c_360px,#b8484f_420px,#cf646c_450px,#d0606a_100%)]">
          <header className="flex h-7 shrink-0 items-center rounded-tl-[5px] border-t border-[#f0a0a0] bg-[linear-gradient(to_right,#f0b8b6_0px,#f2bcba_100px,#d05c60_160px,#cb5357_380px,#dd6a6a_800px,#dd7878_100%)] pl-[6px]">
            <svg viewBox="0 0 16 16" className="size-4">
              <path d="M0 0H16V16H0Z" fill="#1f7474" />
              <path d="M1 12 5 3 8 12M3 9H7M8 10H15M11.500 7V15M10 3 14 8M9.500 8.500H13.500V12.500H9.500Z" stroke="#fff" fill="none" />
            </svg>
            <h1 className={`ml-[5px] pb-[2px] text-[13px] leading-5 text-black ${UI}`}>AutoCAD 2007</h1>
          </header>
          <div className="flex min-h-0 flex-1">
            <div className="w-[5px] shrink-0" />
            <div className="flex min-w-0 flex-1 flex-col border-t border-l border-[#6b2a2a] bg-[#eee]">
              <nav className={`flex h-5 shrink-0 items-center gap-[15px] border-b border-[#b8bccf] bg-gradient-to-b from-white to-[#d5daec] pt-px pl-2 text-xs text-black ${UI}`}>
                {menus.map((m) => (
                  <button key={m} type="button" className="leading-[18px] whitespace-nowrap">{m}</button>
                ))}
              </nav>
              <Toolbars />
              <div className="flex min-h-0 flex-1">
                <div className="w-[27px] shrink-0">
                  <div className="w-[25px] border-r border-b border-[#a5a5a5] pt-px pb-1">
                    <div className="mx-[3px] mb-[2px] h-[3px] border-t border-b border-t-white border-b-[#999]" />
                    <div className="mx-[3px] mb-[2px] h-[3px] border-t border-b border-t-white border-b-[#999]" />
                    {drawTools.map((t) => (
                      <Tool key={t} name={t} className="h-[22px] w-6" />
                    ))}
                  </div>
                </div>
                <DrawingWindow />
              </div>
              <div className="h-[8px] shrink-0 border-b border-[#777] bg-[#f6f6f6]" />
              <div className="flex h-[31px] shrink-0 pt-[10px] pl-[9px]">
                <Grip />
                <label htmlFor="cmd" className="sr-only">命令</label>
                <input
                  id="cmd"
                  defaultValue="命令: 指定对角点:"
                  className="-ml-[2px] h-[21px] min-w-0 flex-1 border-t border-l border-[#555] bg-white text-[17px] leading-5 text-black font-['Liberation_Mono','Noto_Sans_CJK_SC',monospace]"
                />
              </div>
            </div>
          </div>
        </div>
      </div>
      <Balloon />
      <Watermark />
    </div>
  );
}
